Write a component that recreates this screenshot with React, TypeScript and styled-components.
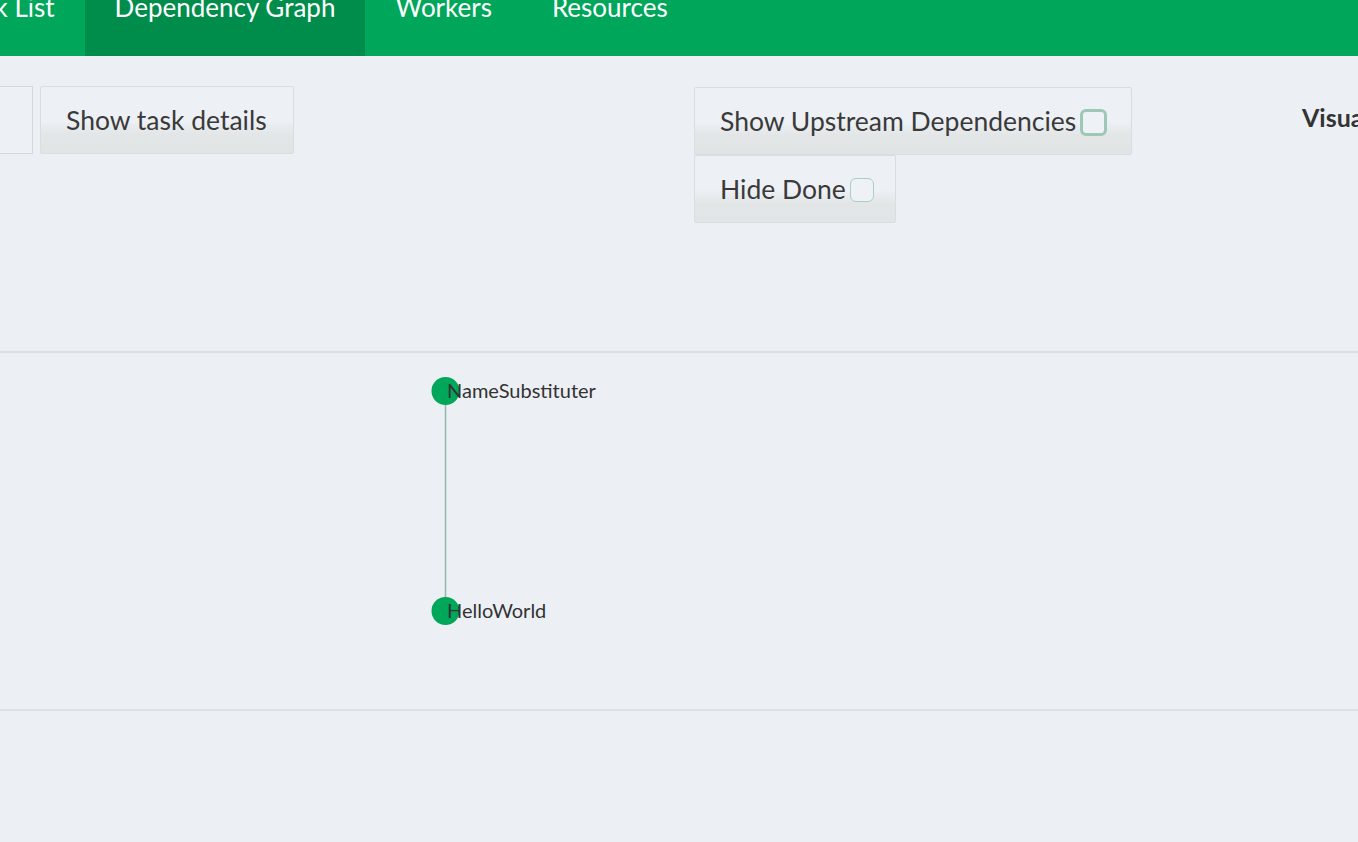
import React from "react";
import styled, { createGlobalStyle } from "styled-components";

const Global = createGlobalStyle`
  html, body { margin: 0; padding: 0; background: #ecf0f5; overflow: hidden; }
  body { font-family: "Source Sans Pro", Lato, "Noto Sans", sans-serif; color: #333; }
`;

const Page = styled.div`
  width: 1358px;
  height: 842px;
  overflow: hidden;
  background: #ecf0f5;
`;

const Header = styled.header`
  height: 56px;
  background: #00a65a;
  overflow: hidden;
`;

const Nav = styled.ul`
  display: flex;
  list-style: none;
  margin: 0 0 0 -72px;
  padding: 0;
  height: 56px;
`;

const Tab = styled.li<{ $active?: boolean }>`
  padding: 0 30px;
  height: 56px;
  background: ${(p) => (p.$active ? "#008d4c" : "transparent")};
  color: #fff;
  font-size: 26px;
  line-height: 20px;
  display: flex;
  align-items: flex-start;
  span { display: block; margin-top: -3px; }
`;

const Toolbar = styled.div`
  display: grid;
  grid-template-columns: 694px 1fr auto;
  padding-top: 30px;
  height: 295px;
  box-sizing: border-box;
`;

const LeftGroup = styled.div`
  display: flex;
  align-items: flex-start;
  gap: 7px;
`;

const PartialBox = styled.div`
  width: 33px;
  height: 68px;
  border: 1px solid #d6d9dc;
  border-left: none;
  box-sizing: border-box;
  background: #edf0f4;
`;

const Button = styled.div<{ $w: number }>`
  width: ${(p) => p.$w}px;
  height: 68px;
  box-sizing: border-box;
  border: 1px solid #dadddf;
  border-radius: 2px;
  background: linear-gradient(to bottom, #edf0f4 0%, #edf0f4 52%, #e3e6e7 72%, #e1e4e4 100%);
  display: flex;
  align-items: center;
  gap: 4px;
  padding-left: 25px;
  font-size: 26.5px;
  color: #3a3a3a;
  white-space: nowrap;
`;

const MidGroup = styled.div`
  display: flex;
  flex-direction: column;
  align-items: flex-start;
  margin-top: 1px;
`;

const Check = styled.span<{ $focus?: boolean }>`
  display: inline-block;
  flex: none;
  width: ${(p) => (p.$focus ? 27 : 24)}px;
  height: ${(p) => (p.$focus ? 27 : 24)}px;
  box-sizing: border-box;
  border: ${(p) => (p.$focus ? "3px solid #9cc8b6" : "1.5px solid #a9cfc2")};
  border-radius: 6px;
  background: #eef1f5;
  margin-top: 2px;
`;

const RightTitle = styled.div`
  font-size: 25px;
  font-weight: 700;
  color: #333;
  padding-top: 16px;
  margin-right: -40px;
  width: 96px;
  white-space: nowrap;
`;

const GraphArea = styled.div`
  position: relative;
  height: 360px;
  border-top: 2px solid #dcdfe3;
  border-bottom: 2px solid #dcdfe3;
  box-sizing: border-box;
`;

const GraphSvg = styled.svg`
  display: block;
  width: 1358px;
  height: 356px;
`;

const labelFont = "'Source Sans Pro', Lato, 'Noto Sans', sans-serif";

export default function App() {
  return (
    <Page>
      <Global />
      <Header>
        <Nav>
          <Tab><span>Task List</span></Tab>
          <Tab $active><span>Dependency Graph</span></Tab>
          <Tab><span>Workers</span></Tab>
          <Tab><span>Resources</span></Tab>
        </Nav>
      </Header>
      <Toolbar>
        <LeftGroup>
          <PartialBox />
          <Button $w={254}>Show task details</Button>
        </LeftGroup>
        <MidGroup>
          <Button $w={438}>Show Upstream Dependencies<Check $focus /></Button>
          <Button $w={202}>Hide Done<Check /></Button>
        </MidGroup>
        <RightTitle>Visualisation</RightTitle>
      </Toolbar>
      <GraphArea>
        <GraphSvg viewBox="0 0 1358 356">
          <line x1="445.5" y1="38" x2="445.5" y2="258" stroke="#8fb9a8" strokeWidth="1.5" />
          <circle cx="445.5" cy="38" r="14" fill="#00a65a" />
          <circle cx="445.5" cy="258" r="14" fill="#00a65a" />
          <text x="447" y="45" fontSize="20" fill="#333" fontFamily={labelFont}>NameSubstituter</text>
          <text x="447" y="265" fontSize="20" fill="#333" fontFamily={labelFont}>HelloWorld</text>
        </GraphSvg>
      </GraphArea>
    </Page>
  );
}
